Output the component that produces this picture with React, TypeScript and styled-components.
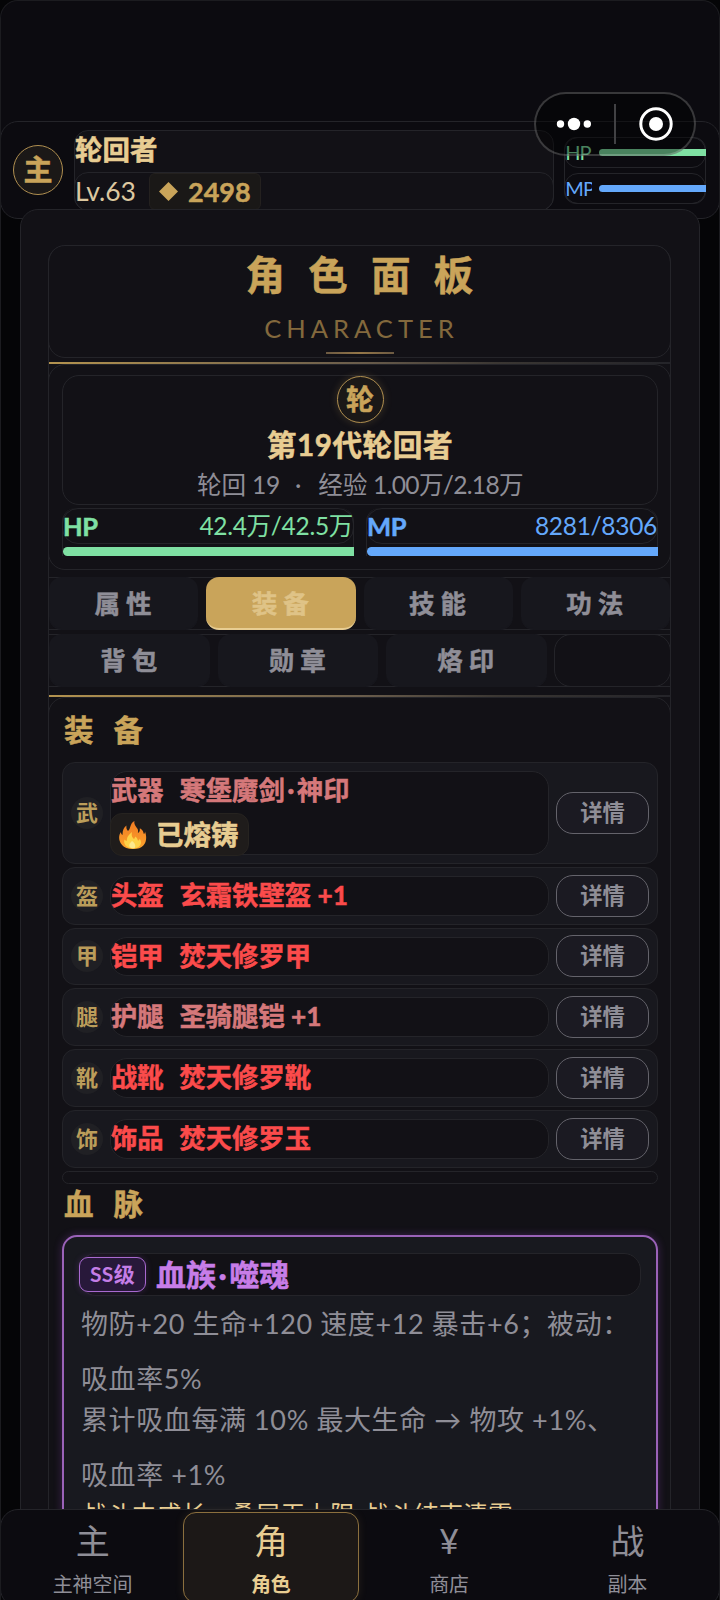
import React from 'react';
import styled, { createGlobalStyle, css } from 'styled-components';

const c = {
  gold: '#c9a45a',
  lightGold: '#e8cd92',
  dim: '#8f8e97',
  line: '#242429',
  panel: '#121116',
  row: '#18181e',
  deep: '#0c0b10',
  hp: '#7fe0a3',
  mp: '#64a8fb',
};

const GlobalStyle = createGlobalStyle`
  * { box-sizing: border-box; }
  html, body { margin: 0; background: #050507; }
  body { font-family: Lato, "Noto Sans CJK SC", sans-serif; color: ${c.dim}; }
  button { font: inherit; padding: 0; margin: 0; }
`;

const outline = css`
  border: 1px solid ${c.line};
`;

const heavy = css`
  font-weight: 700;
  -webkit-text-stroke: 0.5px currentColor;
`;

const Screen = styled.div`
  width: 720px;
  height: 1600px;
  overflow: hidden;
  position: relative;
  display: flex;
  flex-direction: column;
  border: 1px solid #1c1c20;
  border-bottom: 0;
  border-radius: 18px 18px 0 0;
  background: linear-gradient(${c.deep} 0 150px, #050507 150px);
`;

/* ---------- header ---------- */
const Header = styled.header`
  ${outline}
  flex: none;
  height: 98px;
  margin: 120px -1px 0;
  padding: 8px 13px 0 12px;
  display: flex;
  border-radius: 18px;
  background: ${c.deep};
`;

const Avatar = styled.div<{ $size: number; $font: number }>`
  flex: none;
  width: ${(p) => p.$size}px;
  height: ${(p) => p.$size}px;
  border: 1.5px solid #b08f50;
  border-radius: 50%;
  background: #1b1817;
  color: ${c.gold};
  font-size: ${(p) => p.$font}px;
  line-height: ${(p) => p.$size - 3}px;
  ${heavy}
  text-align: center;
`;

const HeaderAvatar = styled(Avatar)`
  margin-top: 15px;
`;

const Identity = styled.div`
  ${outline}
  width: 481px;
  height: 81px;
  margin-left: 11px;
  border-radius: 14px;
  background: ${c.panel};
`;

const PlayerName = styled.div`
  height: 41px;
  padding-top: 2px;
  font-size: 27.5px;
  line-height: 34px;
  ${heavy}
  color: ${c.lightGold};
`;

const LevelRow = styled.div`
  ${outline}
  height: 39px;
  margin: 0 -1px;
  display: flex;
  border-radius: 14px;
  font-size: 26.5px;
  line-height: 36px;
  color: #dcc8a0;
`;

const Level = styled.span`
  width: 74px;
  white-space: nowrap;
`;

const Coins = styled.div`
  width: 112px;
  display: flex;
  align-items: center;
  padding-left: 9px;
  gap: 10px;
  border: 1px solid #24211f;
  border-radius: 6px;
  background: #1a1817;
  color: ${c.gold};
  font-size: 27px;
  ${heavy}
`;

const Vitals = styled.div`
  ${outline}
  width: 142px;
  height: 67px;
  margin: 7px 0 0 10px;
  display: flex;
  flex-direction: column;
  justify-content: space-between;
  border-radius: 12px;
`;

const Vital = styled.div<{ $color: string }>`
  ${outline}
  height: 31px;
  margin: -1px;
  display: flex;
  align-items: center;
  gap: 7px;
  border-radius: 14px;
  color: ${(p) => p.$color};
  font-size: 20px;
  line-height: 29px;
`;

const VitalLabel = styled.span`
  width: 27px;
  overflow: hidden;
  letter-spacing: -0.9px;
  white-space: nowrap;
`;

const Bar = styled.div<{ $color: string; $h: number }>`
  flex: 1;
  height: ${(p) => p.$h}px;
  margin-right: -1px;
  border-radius: 5px 0 0 5px;
  background: ${(p) => p.$color};
`;

const Capsule = styled.div`
  position: absolute;
  left: 533px;
  top: 91px;
  width: 162px;
  height: 64px;
  border: 2px solid rgba(255, 255, 255, 0.2);
  border-radius: 32px;
  background: rgba(0, 0, 0, 0.42);
`;

/* ---------- main panel ---------- */
const Main = styled.main`
  ${outline}
  position: relative;
  flex: none;
  width: 680px;
  height: 1420px;
  margin: -10px 0 0 19px;
  padding: 35px 28px 0 27px;
  border-radius: 18px;
  background: ${c.panel};
`;

const Column = styled.div`
  height: 1380px;
  border: solid ${c.line};
  border-width: 0 1px;
  border-radius: 18px 18px 0 0;
`;

const TitleCard = styled.section`
  ${outline}
  height: 113px;
  margin: 0 -1px;
  display: flex;
  flex-direction: column;
  align-items: center;
  border-radius: 17px;
`;

const Title = styled.h1`
  margin: 1px 0 0;
  padding-left: 23px;
  font-size: 39.5px;
  line-height: 56px;
  letter-spacing: 23.3px;
  ${heavy}
  color: ${c.gold};
`;

const Subtitle = styled.div`
  margin-top: 6px;
  padding-left: 4px;
  font-size: 25.5px;
  line-height: 38px;
  letter-spacing: 5px;
  color: #83693d;
`;

const Underline = styled.div`
  width: 68px;
  height: 2px;
  margin-top: 5px;
  background: linear-gradient(90deg, #6c5a42, #957748 50%, #6c5a42);
`;

const GoldRule = styled.hr<{ $top: number }>`
  height: 2px;
  margin: ${(p) => p.$top}px 0 0;
  border: 0;
  background: linear-gradient(90deg, #b3934f, #6a5d4c 50%, #3b3733 72%, ${c.line});
`;

const Profile = styled.section`
  ${outline}
  height: 206px;
  margin: 0 -1px;
  padding: 10px 12px 0 13px;
  border-radius: 17px;
`;

const ProfileCard = styled.div`
  ${outline}
  height: 130px;
  display: flex;
  flex-direction: column;
  align-items: center;
  border-radius: 17px;
`;

const ProfileAvatar = styled(Avatar)`
  box-shadow: 0 0 8px rgba(201, 164, 90, 0.22);
`;

const ProfileName = styled.h2`
  margin: 2px 0 0;
  font-size: 29.7px;
  line-height: 40px;
  letter-spacing: 0.5px;
  ${heavy}
  color: ${c.lightGold};
`;

const ProfileMeta = styled.div`
  margin-top: 2px;
  display: flex;
  font-size: 24.6px;
  line-height: 36px;
  letter-spacing: -0.2px;
  white-space: nowrap;
`;

const MetaDot = styled.span`
  margin: 0 17px 0 15px;
`;

const MetaValue = styled.span`
  margin-left: 6px;
  letter-spacing: -0.7px;
`;

const Gauges = styled.div`
  display: grid;
  grid-template-columns: 1fr 1fr;
  gap: 12px;
  margin-top: 3px;
`;

const Gauge = styled.div<{ $color: string }>`
  border-left: 1px solid ${c.line};
  border-right: 1px solid ${c.line};
  border-radius: 14px 14px 0 0;
  color: ${(p) => p.$color};
`;

const GaugeText = styled.div`
  ${outline}
  height: 36px;
  margin: 0 -1px 3px;
  display: flex;
  justify-content: space-between;
  border-radius: 16px;
  font-size: 24.5px;
  line-height: 34px;
  letter-spacing: -0.3px;
  white-space: nowrap;
`;

const GaugeName = styled.b`
  font-size: 25.5px;
  ${heavy}
`;

const Tabs = styled.nav<{ $cols: string; $top: number }>`
  border: solid ${c.line};
  border-width: 1px 0;
  height: 53px;
  margin-top: ${(p) => p.$top}px;
  display: grid;
  grid-template-columns: ${(p) => p.$cols};
  gap: 8px;
`;

const Tab = styled.button<{ $active?: boolean }>`
  margin: -1px 0;
  border: 0;
  border-bottom: 2px solid ${(p) => (p.$active ? '#e8cd92' : '#17171d')};
  border-radius: 13px;
  background: ${(p) => (p.$active ? c.gold : '#17171d')};
  color: ${(p) => (p.$active ? '#dfc387' : c.dim)};
  font-size: 25.5px;
  letter-spacing: 6px;
  padding-left: 5px;
  ${heavy}
  line-height: 48px;
`;

const EmptySlot = styled.div`
  ${outline}
  margin: -1px;
  border-radius: 17px;
`;

const Section = styled.section`
  ${outline}
  height: 1000px;
  margin: 0 -1px;
  padding: 13px 12px 0 13px;
  border-radius: 17px;
`;

const Heading = styled.h3`
  margin: 0;
  padding-left: 2px;
  font-size: 29.5px;
  line-height: 38px;
  letter-spacing: 20px;
  ${heavy}
  color: ${c.gold};
`;

const GearList = styled.div`
  margin: 13px 0 1px;
  display: flex;
  flex-direction: column;
  gap: 3px;
`;

const GearRow = styled.article<{ $tall?: boolean }>`
  ${outline}
  height: ${(p) => (p.$tall ? 101.75 : 57.75)}px;
  padding: 0 8px;
  display: flex;
  align-items: center;
  border-radius: 13px;
  background: ${c.row};
`;

const Slot = styled.div`
  width: 32px;
  height: 32px;
  border-radius: 50%;
  background: #202024;
  color: #bb9d5a;
  font-size: 22px;
  line-height: 31px;
  font-weight: 700;
  text-align: center;
`;

const GearBody = styled.div`
  ${outline}
  width: 440px;
  height: calc(100% - 16px);
  margin: 0 7px 0 7px;
  border-radius: 17px;
  background: ${c.panel};
`;

const GearName = styled.div<{ $color: string }>`
  display: flex;
  gap: 16px;
  font-size: 26.3px;
  line-height: 37px;
  ${heavy}
  white-space: nowrap;
  color: ${(p) => p.$color};
`;

const MidDot = styled.i`
  font-style: normal;
  margin: 0 2.5px;
`;

const Forged = styled.div`
  width: 139px;
  height: 43px;
  margin: 4px 0 0 -1px;
  padding-left: 8px;
  display: flex;
  align-items: center;
  gap: 9px;
  border: 1px solid #262320;
  border-radius: 12px;
  background: #1f1c1b;
  color: ${c.lightGold};
  font-size: 27.5px;
  line-height: 40px;
  ${heavy}
`;

const DetailButton = styled.button`
  width: 93px;
  height: 42px;
  border: 1.5px solid #64636b;
  border-radius: 17px;
  background: #1b1a22;
  color: ${c.dim};
  font-size: 22.3px;
  line-height: 36px;
  font-weight: 700;
`;

const EmptyLine = styled.div`
  ${outline}
  height: 13px;
  border-radius: 7px;
`;

const Bloodline = styled.article`
  height: 420px;
  margin-top: 12px;
  padding: 16px 15px;
  border: 2px solid #9a62b8;
  border-radius: 15px;
  background: #18191f;
  box-shadow: 0 0 8px rgba(160, 80, 210, 0.3);
`;

const BloodHead = styled.div`
  ${outline}
  height: 43px;
  display: flex;
  align-items: center;
  gap: 10px;
  border-radius: 17px;
  background: ${c.panel};
`;

const Rank = styled.span`
  width: 67px;
  height: 35px;
  margin-left: -1px;
  border: 1.5px solid #a869d0;
  border-radius: 9px;
  background: #28183a;
  color: #c47de6;
  font-size: 21px;
  line-height: 31px;
  letter-spacing: 0.3px;
  font-weight: 700;
  text-align: center;
  box-shadow: 0 0 6px rgba(160, 80, 210, 0.25);
`;

const BloodName = styled.h4`
  margin: 0;
  font-size: 30px;
  line-height: 38px;
  ${heavy}
  color: #c77de8;
`;

const Effect = styled.p<{ $top: number }>`
  margin: ${(p) => p.$top}px 0 0 2px;
  font-size: 27px;
  line-height: 55px;
  letter-spacing: 0.6px;
  white-space: nowrap;
`;

const Growth = styled.p`
  margin: -5px 0 0 3px;
  font-size: 24.8px;
  line-height: 36px;
  word-spacing: 3px;
  white-space: nowrap;
  color: ${c.lightGold};
`;

/* ---------- bottom navigation ---------- */
const BottomNav = styled.nav`
  ${outline}
  position: absolute;
  left: -1px;
  right: -1px;
  bottom: -7px;
  height: 98px;
  padding: 2px 2px 3px 3px;
  display: grid;
  grid-template-columns: repeat(4, 1fr);
  border-radius: 18px;
  background: ${c.deep};
`;

const NavItem = styled.a<{ $active?: boolean }>`
  display: flex;
  flex-direction: column;
  align-items: center;
  margin: 0 2px 0 1px;
  border: 1.5px solid ${(p) => (p.$active ? '#8b6f3e' : 'transparent')};
  border-radius: 13px;
  background: ${(p) => (p.$active ? '#1c1817' : 'transparent')};
  box-shadow: ${(p) => (p.$active ? '0 0 10px rgba(201, 164, 90, 0.12)' : 'none')};
  color: ${(p) => (p.$active ? c.lightGold : c.dim)};
  font-weight: ${(p) => (p.$active ? 700 : 400)};
`;

const NavGlyph = styled.span`
  height: 54px;
  padding-top: 2px;
  font-size: 34px;
  line-height: 52px;
  font-weight: 400;
`;

const NavLabel = styled.span`
  margin-top: 1px;
  font-size: 20px;
  line-height: 32px;
`;

const CapsuleIcons = () => (
  <svg width="158" height="60" viewBox="0 0 158 60" fill="#fff">
    <circle cx="24.5" cy="30" r="3.7" />
    <circle cx="38" cy="30" r="6.2" />
    <circle cx="51.3" cy="30" r="3.7" />
    <rect x="78" y="10" width="2" height="40" fill="#414144" />
    <circle cx="120" cy="30" r="15.2" fill="none" stroke="#fff" strokeWidth="3" />
    <circle cx="120" cy="30" r="7" />
  </svg>
);

const Diamond = () => (
  <svg width="19" height="19" viewBox="0 0 19 19">
    <path d="M9.5 0 19 9.500 9.500 19 0 9.500z" fill={c.gold} />
  </svg>
);

const Flame = () => (
  <svg width="28" height="30" viewBox="0 0 28 30">
    <defs>
      <linearGradient id="flame" x1="0" y1="0" x2="0" y2="1">
        <stop offset="0" stopColor="#f07a22" />
        <stop offset="1" stopColor="#fba32c" />
      </linearGradient>
    </defs>
    <path
      fill="url(#flame)"
      d="M15.500 1c-.8 3 1 5 2.800 7.500 1 1.500 1 3 .5 4.500 1.500-.4 2.300-2.300 2-4.800 3.500 2 3.500 4 4 5.800.8 0 1.300-1.300 1.200-2.600C28.500 18 28 29 14 29 1 29-1 19 .6 14.500c.3-1 .8-1.800 1.400-2.500 0 1.500.5 2.700 1.500 3C3.500 10 5 7 7.500 5.500c-.4 2.500.1 4 1.500 5.500C12 9 10.500 3.500 15.500 1z"
    />
    <path
      fill="#fdd247"
      d="M13 12c-1 4 .5 5.500 2 7 .8-.8 1-1.700 1-2.600 2.500 1.500 2.500 3 3 4.400.9-.3 1.500-1 1.800-2C24 24 20.500 28.500 14 28.500S4 24 5.500 19.500c.7.9 1.500 1.300 2.500 1.200C7.500 17 10 15 13 12z"
    />
    <path fill="#fbe98e" d="M13 21c2 1.500 4.500 4 2.500 7.200-5 .8-7.500-3-2.500-7.200z" />
  </svg>
);

const RED = '#fb4b4b';
const ROSE = '#d5787a';

const gear = [
  { slot: '武', kind: '武器', name: '寒堡魔剑·神印', color: ROSE, forged: true },
  { slot: '盔', kind: '头盔', name: '玄霜铁壁盔 +1', color: RED },
  { slot: '甲', kind: '铠甲', name: '焚天修罗甲', color: RED },
  { slot: '腿', kind: '护腿', name: '圣骑腿铠 +1', color: ROSE },
  { slot: '靴', kind: '战靴', name: '焚天修罗靴', color: RED },
  { slot: '饰', kind: '饰品', name: '焚天修罗玉', color: RED },
];

const navItems = [
  { glyph: '主', label: '主神空间' },
  { glyph: '角', label: '角色', active: true },
  { glyph: '¥', label: '商店' },
  { glyph: '战', label: '副本' },
];

const Dotted = ({ text }: { text: string }) => {
  const [first, second] = text.split('·');
  return (
    <span>
      {first}
      {second && (
        <>
          <MidDot>·</MidDot>
          {second}
        </>
      )}
    </span>
  );
};

const StatGauge = ({ name, value, color }: { name: string; value: string; color: string }) => (
  <Gauge $color={color}>
    <GaugeText>
      <GaugeName>{name}</GaugeName>
      <span>{value}</span>
    </GaugeText>
    <Bar $color={color} $h={9} />
  </Gauge>
);

export default function App() {
  return (
    <Screen>
      <GlobalStyle />
      <Header>
        <HeaderAvatar $size={50} $font={29}>主</HeaderAvatar>
        <Identity>
          <PlayerName>轮回者</PlayerName>
          <LevelRow>
            <Level>Lv.63</Level>
            <Coins>
              <Diamond />
              2498
            </Coins>
          </LevelRow>
        </Identity>
        <Vitals>
          <Vital $color={c.hp}>
            <VitalLabel>HP</VitalLabel>
            <Bar $color={c.hp} $h={7} />
          </Vital>
          <Vital $color={c.mp}>
            <VitalLabel>MP</VitalLabel>
            <Bar $color={c.mp} $h={7} />
          </Vital>
        </Vitals>
      </Header>

      <Main>
        <Column>
          <TitleCard>
            <Title>角色面板</Title>
            <Subtitle>CHARACTER</Subtitle>
            <Underline />
          </TitleCard>
          <GoldRule $top={4} />

          <Profile>
            <ProfileCard>
              <ProfileAvatar $size={47} $font={28}>轮</ProfileAvatar>
              <ProfileName>第19代轮回者</ProfileName>
              <ProfileMeta>
                轮回 19
                <MetaDot>·</MetaDot>
                经验
                <MetaValue>1.00万/2.18万</MetaValue>
              </ProfileMeta>
            </ProfileCard>
            <Gauges>
              <StatGauge name="HP" value="42.4万/42.5万" color={c.hp} />
              <StatGauge name="MP" value="8281/8306" color={c.mp} />
            </Gauges>
          </Profile>

          <Tabs $cols="repeat(4, 1fr)" $top={7}>
            <Tab>属性</Tab>
            <Tab $active>装备</Tab>
            <Tab>技能</Tab>
            <Tab>功法</Tab>
          </Tabs>
          <Tabs $cols="160.5px 160.5px 160.5px 1fr" $top={4}>
            <Tab>背包</Tab>
            <Tab>勋章</Tab>
            <Tab>烙印</Tab>
            <EmptySlot />
          </Tabs>
          <GoldRule $top={8} />

          <Section>
            <Heading>装备</Heading>
            <GearList>
              {gear.map((g) => (
                <GearRow key={g.slot} $tall={g.forged}>
                  <Slot>{g.slot}</Slot>
                  <GearBody>
                    <GearName $color={g.color}>
                      <span>{g.kind}</span>
                      <Dotted text={g.name} />
                    </GearName>
                    {g.forged && (
                      <Forged>
                        <Flame />
                        已熔铸
                      </Forged>
                    )}
                  </GearBody>
                  <DetailButton>详情</DetailButton>
                </GearRow>
              ))}
              <EmptyLine />
            </GearList>

            <Heading>血脉</Heading>
            <Bloodline>
              <BloodHead>
                <Rank>SS级</Rank>
                <BloodName>
                  <Dotted text="血族·噬魂" />
                </BloodName>
              </BloodHead>
              <Effect $top={0}>
                物防+20 生命+120 速度+12 暴击+6；被动：
                <br />
                吸血率5%
              </Effect>
              <Effect $top={-14}>
                累计吸血每满 10% 最大生命 → 物攻 +1%、
                <br />
                吸血率 +1%
              </Effect>
              <Growth>战斗中成长，叠层无上限 战斗结束清零</Growth>
            </Bloodline>
          </Section>
        </Column>
      </Main>

      <Capsule>
        <CapsuleIcons />
      </Capsule>

      <BottomNav>
        {navItems.map((n) => (
          <NavItem key={n.label} $active={n.active}>
            <NavGlyph>{n.glyph}</NavGlyph>
            <NavLabel>{n.label}</NavLabel>
          </NavItem>
        ))}
      </BottomNav>
    </Screen>
  );
}
